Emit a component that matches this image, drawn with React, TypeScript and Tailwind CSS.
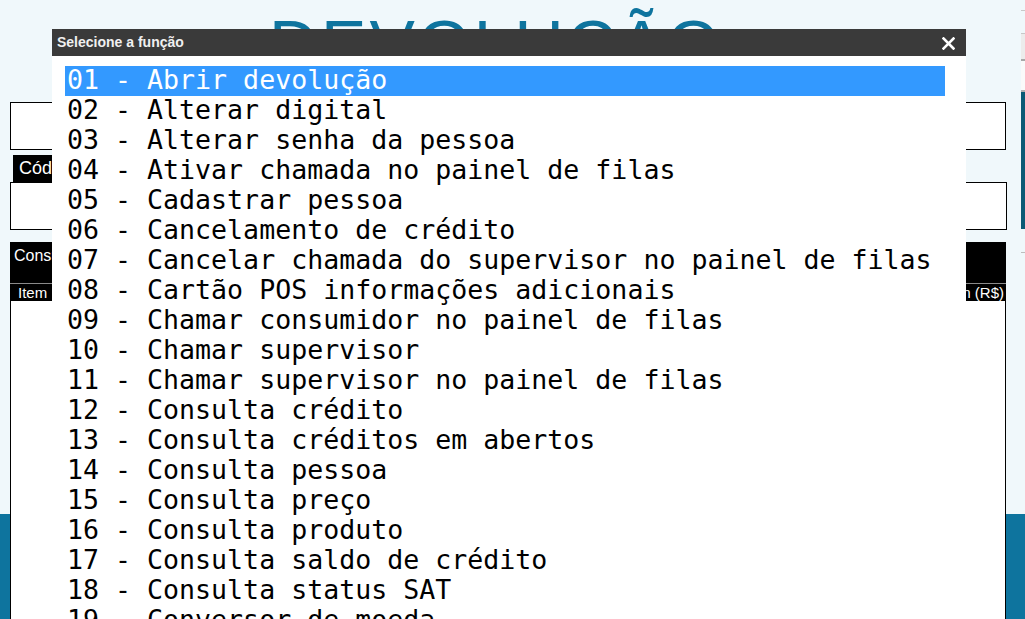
const funcoes = [
  "Abrir devolução",
  "Alterar digital",
  "Alterar senha da pessoa",
  "Ativar chamada no painel de filas",
  "Cadastrar pessoa",
  "Cancelamento de crédito",
  "Cancelar chamada do supervisor no painel de filas",
  "Cartão POS informações adicionais",
  "Chamar consumidor no painel de filas",
  "Chamar supervisor",
  "Chamar supervisor no painel de filas",
  "Consulta crédito",
  "Consulta créditos em abertos",
  "Consulta pessoa",
  "Consulta preço",
  "Consulta produto",
  "Consulta saldo de crédito",
  "Consulta status SAT",
  "Conversor de moeda",
];

const sans = "font-['Liberation_Sans',Arial,sans-serif]";

function FuncaoModal() {
  return (
    <div className="absolute left-[52px] top-[29px] bottom-0 w-[914px] flex flex-col">
      <div className="h-[27px] shrink-0 bg-[#3a3a3a] flex items-center justify-between pl-[5px] pr-[11px]">
        <span className={`${sans} text-[14px] font-bold text-[#f0f0f0]`}>Selecione a função</span>
        <svg width="13" height="13" viewBox="0 0 13 13" className="mt-[1px]">
          <path d="M1.5 1.5 L11.5 11.5 M11.5 1.5 L1.5 11.5" stroke="#fff" strokeWidth="2.6" strokeLinecap="square" />
        </svg>
      </div>
      <div className="flex-1 bg-white pt-[10px] pl-[13px] pr-[21px]">
        <ul className="font-['DejaVu_Sans_Mono',monospace] text-[26.6px] leading-[30px]">
          {funcoes.map((nome, idx) => {
            const num = String(idx + 1).padStart(2, "0");
            const selected = idx === 0;
            return (
              <li
                key={num}
                className={`h-[30px] pl-[2px] whitespace-pre ${
                  selected ? "bg-[#3399ff] text-white" : "text-black"
                }`}
              >
                <span className="relative -top-[1px]">{`${num} - ${nome}`}</span>
              </li>
            );
          })}
        </ul>
      </div>
    </div>
  );
}

function SideStrip() {
  return (
    <div className="w-[4px] shrink-0 flex flex-col">
      <div className="h-[10px]" />
      <div className="h-[1px] bg-[#c8c8c8]" />
      <div className="h-[22px]" />
      <div className="h-[1px] bg-[#c8c8c8]" />
      <div className="h-[25px] bg-[#ececec]" />
      <div className="h-[2px] bg-[#a8a8a8]" />
      <div className="h-[29px] bg-[#fafafa]" />
      <div className="h-[2px] bg-[#b0b0b0]" />
      <div className="h-[137px] bg-[#0b5a75]" />
      <div className="h-[23px]" />
      <div className="h-[1px] bg-[#bdbdbd]" />
    </div>
  );
}

export default function App() {
  return (
    <div className="relative h-[619px] w-full overflow-hidden flex bg-[linear-gradient(to_bottom,#f0f8fb_514px,#0e749e_514px)]">
      <div className="flex-1 flex flex-col pl-[10px] pr-[15px]">
        <div className="h-[102px] shrink-0 pr-[24px] text-center">
          <h1 className={`${sans} mt-[10px] text-[68px] leading-none tracking-[3px] text-[#0e749e]`}>
            DEVOLUÇÃO
          </h1>
        </div>

        <div className="h-[48px] shrink-0 border border-black bg-white" />

        <div className="mt-[5px] ml-[3px] h-[27px] w-[140px] bg-black pl-[6px] flex items-center">
          <span className={`${sans} text-[18px] text-white`}>Código</span>
        </div>
        <div className="h-[48px] shrink-0 border border-black bg-white -mr-[1px]" />

        <div className="mt-[12px] h-[41px] shrink-0 bg-black pl-[4px] pt-[1px]">
          <span className={`${sans} text-[16px] text-white`}>Consulta</span>
        </div>
        <div className="h-[1px] bg-[#8a8a8a]" />
        <div className={`${sans} h-[17px] bg-black text-[15px] leading-[17px] text-white flex justify-between pl-[8px] pr-[2px]`}>
          <span>Item</span>
          <span>Valor Item (R$)</span>
        </div>
        <div className="flex-1 border-x border-black bg-white" />
      </div>
      <SideStrip />

      <FuncaoModal />
    </div>
  );
}
